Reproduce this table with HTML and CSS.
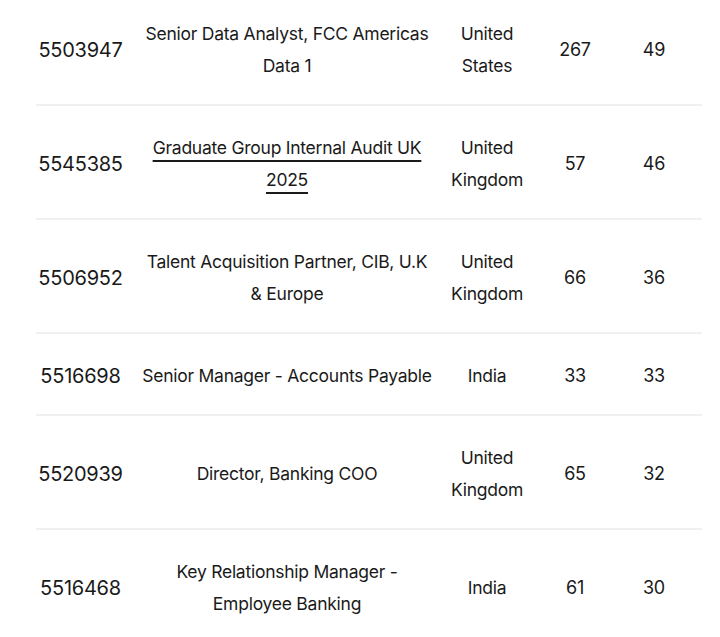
FILE: index.html
```html
<!DOCTYPE html>
<html lang="en">
<head>
<meta charset="utf-8">
<title>Jobs</title>
<link rel="stylesheet" href="styles.css">
</head>
<body>
<div class="table">
  <div class="row">
    <div class="cell id">5503947</div>
    <div class="cell title">Senior Data Analyst, FCC Americas Data 1</div>
    <div class="cell country">United States</div>
    <div class="cell num">267</div>
    <div class="cell num">49</div>
  </div>
  <div class="row">
    <div class="cell id">5545385</div>
    <div class="cell title"><a class="link" href="#">Graduate Group Internal Audit UK 2025</a></div>
    <div class="cell country">United Kingdom</div>
    <div class="cell num">57</div>
    <div class="cell num">46</div>
  </div>
  <div class="row">
    <div class="cell id">5506952</div>
    <div class="cell title">Talent Acquisition Partner, CIB, U.K &amp; Europe</div>
    <div class="cell country">United Kingdom</div>
    <div class="cell num">66</div>
    <div class="cell num">36</div>
  </div>
  <div class="row">
    <div class="cell id">5516698</div>
    <div class="cell title">Senior Manager - Accounts Payable</div>
    <div class="cell country">India</div>
    <div class="cell num">33</div>
    <div class="cell num">33</div>
  </div>
  <div class="row">
    <div class="cell id">5520939</div>
    <div class="cell title">Director, Banking COO</div>
    <div class="cell country">United Kingdom</div>
    <div class="cell num">65</div>
    <div class="cell num">32</div>
  </div>
  <div class="row">
    <div class="cell id">5516468</div>
    <div class="cell title">Key Relationship Manager - Employee Banking</div>
    <div class="cell country">India</div>
    <div class="cell num">61</div>
    <div class="cell num">30</div>
  </div>
</div>
</body>
</html>
```
FILE: styles.css
```css
html, body {
  margin: 0;
  padding: 0;
  background: #ffffff;
}
body {
  font-family: Inter, "Noto Sans", "Liberation Sans", sans-serif;
  color: #1a1a1a;
  overflow: hidden;
}
.table {
  margin: -8px 0 0 36px;
  width: 666px;
}
.row {
  display: grid;
  grid-template-columns: 89px 324px 76px 100px 58px;
  padding-right: 19px;
  border-bottom: 2px solid #f0f0f0;
  align-items: center;
}
.cell {
  padding: 26px 0 22px;
  text-align: center;
  font-size: 17.5px;
  line-height: 32px;
  letter-spacing: -0.25px;
}
.cell.id {
  font-size: 20px;
}
.cell.title {
  padding-left: 14px;
  padding-right: 14px;
}
.cell.num {
  font-size: 18px;
}
.link {
  color: #1a1a1a;
  text-decoration: underline;
  text-decoration-thickness: 1.5px;
  text-underline-offset: 6px;
}
```
